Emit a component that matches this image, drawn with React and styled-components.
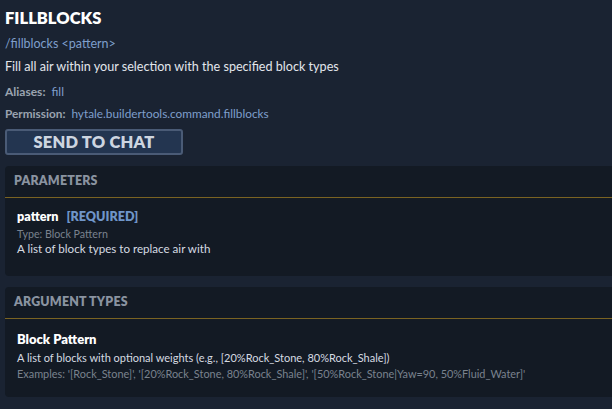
import React from "react";
import styled, { createGlobalStyle } from "styled-components";

const Global = createGlobalStyle`
  html, body { margin: 0; padding: 0; background: #1a2332; }
  body { font-family: "Lato", "Noto Sans", sans-serif; overflow: hidden; }
`;

const Page = styled.div`
  width: 612px;
  height: 409px;
  overflow: hidden;
  background: #1a2332;
  padding: 8px 0 0 5px;
  box-sizing: border-box;
  color: #e6e9ee;
`;

const Title = styled.h1`
  margin: 0;
  font-size: 16.5px;
  font-weight: 800;
  color: #ffffff;
  line-height: 20px;
`;

const Usage = styled.div`
  margin-top: 8px;
  font-size: 12.5px;
  color: #7f9fcc;
  line-height: 16px;
`;

const Description = styled.p`
  margin: 7px 0 0;
  font-size: 12.6px;
  color: #e2e6ec;
  line-height: 16px;
`;

const MetaRow = styled.div`
  margin-top: ${(p) => p.$gap}px;
  font-size: ${(p) => p.$size}px;
  line-height: 16px;
  display: flex;
  gap: 6px;
`;

const MetaLabel = styled.span`
  font-weight: 700;
  color: #9aa3b0;
`;

const MetaValue = styled.span`
  color: #7f9fcc;
`;

const SendButton = styled.button`
  margin-top: 7px;
  width: 178px;
  height: 26px;
  background: #233550;
  border: 2px solid #4a5b76;
  border-radius: 3px;
  color: #cdd5e0;
  font-family: "Lato", "Noto Sans", sans-serif;
  font-weight: 800;
  font-size: 16.5px;
  letter-spacing: 0.2px;
  padding: 0;
  display: block;
`;

const Panel = styled.section`
  margin-top: 11px;
  margin-right: -20px;
  background: #131a24;
  border-radius: 4px;
  padding-bottom: ${(p) => p.$bottom}px;
`;

const PanelHeader = styled.div`
  padding: 7px 0 0 9px;
  height: 32px;
  box-sizing: border-box;
  border-bottom: 1px solid #7a6322;
  font-size: 12.4px;
  font-weight: 800;
  color: #8a93a0;
  letter-spacing: 0.2px;
  line-height: 16px;
`;

const PanelBody = styled.div`
  padding: ${(p) => p.$top}px 0 0 12px;
`;

const ItemName = styled.div`
  display: flex;
  gap: 8px;
  font-size: ${(p) => p.$size}px;
  font-weight: 800;
  line-height: 16px;
  color: #ffffff;
`;

const Required = styled.span`
  color: #6f95c8;
`;

const SubText = styled.div`
  font-size: ${(p) => p.$size}px;
  color: #7a828e;
  line-height: 14px;
  margin-top: ${(p) => p.$gap || 0}px;
`;

const BodyText = styled.div`
  font-size: ${(p) => p.$size}px;
  color: #d6dbe2;
  line-height: 15px;
  margin-top: ${(p) => p.$gap || 0}px;
`;

export default function App() {
  return (
    <>
      <Global />
      <Page>
        <Title>FILLBLOCKS</Title>
        <Usage>/fillblocks &lt;pattern&gt;</Usage>
        <Description>Fill all air within your selection with the specified block types</Description>
        <MetaRow $gap={9} $size={12}>
          <MetaLabel>Aliases:</MetaLabel>
          <MetaValue>fill</MetaValue>
        </MetaRow>
        <MetaRow $gap={6} $size={11.8}>
          <MetaLabel>Permission:</MetaLabel>
          <MetaValue>hytale.buildertools.command.fillblocks</MetaValue>
        </MetaRow>
        <SendButton>SEND TO CHAT</SendButton>

        <Panel $bottom={20}>
          <PanelHeader>PARAMETERS</PanelHeader>
          <PanelBody $top={11}>
            <ItemName $size={12.6}>
              <span>pattern</span>
              <Required>[REQUIRED]</Required>
            </ItemName>
            <SubText $gap={2} $size={10.7}>Type: Block Pattern</SubText>
            <BodyText $size={11.6}>A list of block types to replace air with</BodyText>
          </PanelBody>
        </Panel>

        <Panel $bottom={16}>
          <PanelHeader>ARGUMENT TYPES</PanelHeader>
          <PanelBody $top={12}>
            <ItemName $size={13}>
              <span>Block Pattern</span>
            </ItemName>
            <BodyText $gap={2.5} $size={11}>
              A list of blocks with optional weights (e.g., [20%Rock_Stone, 80%Rock_Shale])
            </BodyText>
            <SubText $gap={2.5} $size={10.9}>
              Examples: '[Rock_Stone]', '[20%Rock_Stone, 80%Rock_Shale]', '[50%Rock_Stone|Yaw=90, 50%Fluid_Water]'
            </SubText>
          </PanelBody>
        </Panel>
      </Page>
    </>
  );
}
